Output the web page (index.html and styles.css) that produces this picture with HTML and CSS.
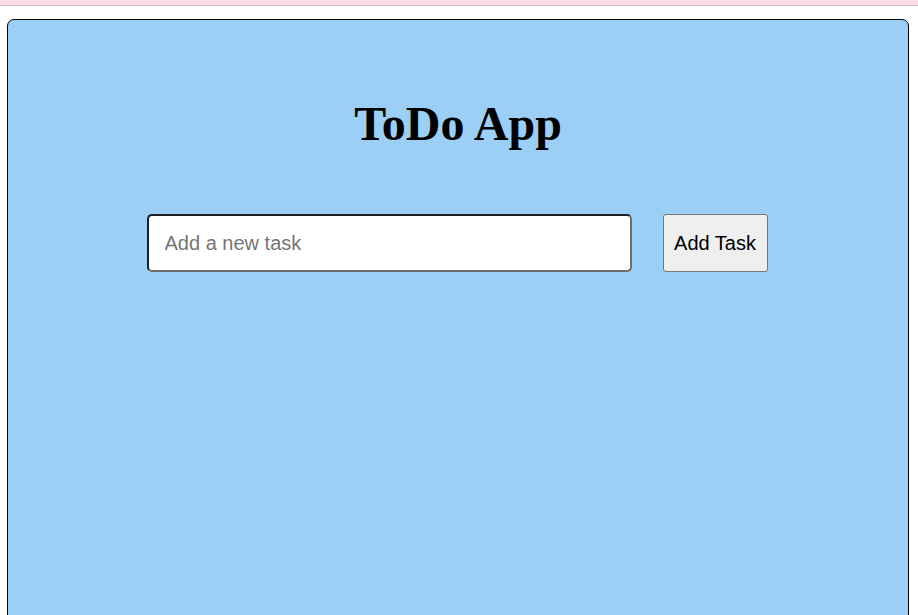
FILE: index.html
```html
<!DOCTYPE html>
<html lang="en">
<head>
<meta charset="utf-8">
<title>ToDo App</title>
<link rel="stylesheet" href="styles.css">
</head>
<body>
<div class="topbar"></div>
<main class="card">
  <h1 class="title">ToDo App</h1>
  <form class="add-row" onsubmit="return false">
    <input class="task-input" type="text" placeholder="Add a new task">
    <button class="add-btn" type="submit">Add Task</button>
  </form>
</main>
</body>
</html>
```
FILE: styles.css
```css
html, body {
  margin: 0;
  padding: 0;
  background: #ffffff;
  overflow: hidden;
}
.topbar {
  height: 5px;
  background: #fddde4;
  border-bottom: 1px solid #d9b3c0;
}
.card {
  margin: 13px 9px 0 7px;
  min-height: 700px;
  background: #9bcff6;
  border: 1px solid #000;
  border-radius: 7px;
  padding-top: 77px;
  box-sizing: border-box;
}
.title {
  margin: 0;
  text-align: center;
  font-family: "Liberation Serif", serif;
  font-weight: bold;
  font-size: 48px;
  line-height: 53px;
  color: #000;
}
.add-row {
  margin: 64px 0 0 0;
  padding-right: 2px;
  display: flex;
  justify-content: center;
  gap: 31px;
}
.task-input {
  width: 485px;
  height: 58px;
  box-sizing: border-box;
  border: 2px solid #6e6e6e;
  border-top-color: #1f1f1f;
  border-left-color: #1f1f1f;
  border-radius: 5px;
  padding: 0 16px;
  font-family: "Liberation Sans", Arial, sans-serif;
  font-size: 20px;
  color: #000;
  background: #fff;
  outline: none;
}
.task-input::placeholder {
  color: #757575;
}
.add-btn {
  width: 105px;
  height: 58px;
  box-sizing: border-box;
  border: 1px solid #767676;
  border-radius: 3px;
  background: #efefef;
  font-family: "Liberation Sans", Arial, sans-serif;
  font-size: 20px;
  color: #000;
  padding: 0;
}
```
